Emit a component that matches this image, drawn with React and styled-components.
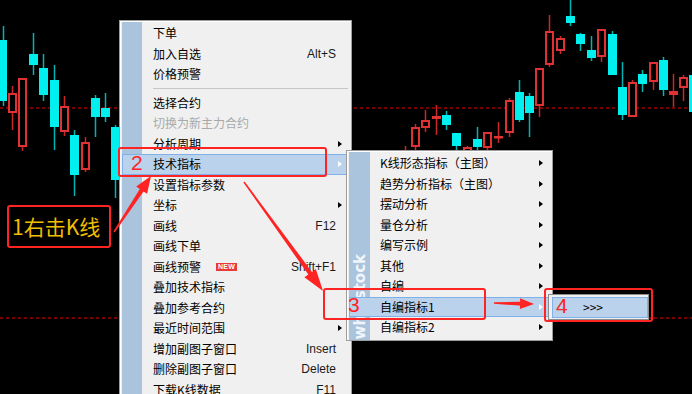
import React from 'react';
import styled, { createGlobalStyle } from 'styled-components';

const STRIPE = '#aac4de';
const RED = '#ff2424';

const GlobalStyle = createGlobalStyle`
  html, body {
    margin: 0;
    padding: 0;
    background: #000;
  }
  body {
    font-family: "Noto Sans CJK SC", "Liberation Sans", sans-serif;
  }
`;

// [left, bodyTop, bodyBottom, wickTop, wickBottom, kind]
const CANDLES = [
  [0, 40, 101, 26, 106, 'up', 7],
  [8, 93, 113, 86, 130, 'down'],
  [18, 78, 147, 78, 151, 'down'],
  [29, 54, 65, 33, 75, 'up'],
  [39, 68, 95, 54, 101, 'up'],
  [50, 80, 127, 65, 150, 'up'],
  [60, 106, 132, 96, 136, 'down'],
  [70, 135, 175, 130, 196, 'up'],
  [81, 142, 170, 137, 172, 'down'],
  [91, 98, 117, 95, 137, 'up'],
  [101, 108, 117, 93, 122, 'up'],
  [111, 127, 180, 125, 198, 'up'],
  [401, 152, 170, 146, 172, 'down'],
  [411, 127, 147, 124, 150, 'down'],
  [421, 120, 128, 110, 132, 'down'],
  [432, 116, 119, 105, 135, 'down'],
  [442, 115, 125, 111, 130, 'up'],
  [452, 133, 146, 133, 152, 'up'],
  [463, 147, 152, 146, 152, 'down'],
  [473, 139, 147, 127, 150, 'up'],
  [483, 132, 148, 132, 150, 'down'],
  [494, 136, 137, 122, 143, 'down'],
  [505, 100, 133, 98, 137, 'down'],
  [515, 92, 120, 80, 122, 'up'],
  [525, 96, 113, 93, 137, 'up'],
  [535, 68, 106, 68, 117, 'down'],
  [545, 31, 65, 15, 67, 'down'],
  [556, 38, 51, 36, 54, 'down'],
  [566, 16, 23, 0, 26, 'up'],
  [576, 34, 44, 33, 51, 'up'],
  [587, 50, 58, 36, 61, 'up'],
  [597, 29, 57, 29, 62, 'down'],
  [608, 34, 75, 31, 75, 'up'],
  [618, 87, 115, 62, 120, 'up'],
  [628, 82, 117, 80, 117, 'down'],
  [638, 74, 84, 70, 92, 'up'],
  [649, 62, 82, 62, 90, 'down'],
  [659, 60, 90, 57, 96, 'up'],
  [669, 91, 95, 74, 107, 'down'],
  [679, 77, 88, 75, 101, 'down'],
  [689, 75, 112, 72, 115, 'up'],
];

const MAIN_ITEMS = [
  { label: '下单' },
  { label: '加入自选', shortcut: 'Alt+S' },
  { label: '价格预警' },
  { separator: true },
  { label: '选择合约' },
  { label: '切换为新主力合约', disabled: true },
  { label: '分析周期', sub: true },
  { label: '技术指标', sub: true, active: true },
  { label: '设置指标参数' },
  { label: '坐标', sub: true },
  { label: '画线', shortcut: 'F12' },
  { label: '画线下单' },
  { label: '画线预警', badge: true, shortcut: 'Shift+F1' },
  { label: '叠加技术指标' },
  { label: '叠加参考合约' },
  { label: '最近时间范围', sub: true },
  { label: '增加副图子窗口', shortcut: 'Insert' },
  { label: '删除副图子窗口', shortcut: 'Delete' },
  { label: '下载K线数据', shortcut: 'F11' },
];

const SUB_ITEMS = [
  { label: 'K线形态指标（主图）', sub: true },
  { label: '趋势分析指标（主图）', sub: true },
  { label: '摆动分析', sub: true },
  { label: '量仓分析', sub: true },
  { label: '编写示例', sub: true },
  { label: '其他', sub: true },
  { label: '自编', sub: true },
  { label: '自编指标1', sub: true, active: true },
  { label: '自编指标2', sub: true },
];

function arrowPoints(x0, y0, x1, y1, head, hw, sw = 2, tw = 0.8) {
  const len = Math.hypot(x1 - x0, y1 - y0);
  const dx = (x1 - x0) / len;
  const dy = (y1 - y0) / len;
  const nx = -dy;
  const ny = dx;
  const bx = x1 - dx * head;
  const by = y1 - dy * head;
  const pts = [
    [x0 + nx * tw, y0 + ny * tw],
    [bx + nx * sw, by + ny * sw],
    [bx + nx * hw, by + ny * hw],
    [x1, y1],
    [bx - nx * hw, by - ny * hw],
    [bx - nx * sw, by - ny * sw],
    [x0 - nx * tw, y0 - ny * tw],
  ];
  return pts.map(p => p.map(v => v.toFixed(1)).join(',')).join(' ');
}

function Candle({ c }) {
  const [x, bt, bb, wt, wb, kind, w = 9] = c;
  const mid = x + Math.floor(w / 2) + 0.5;
  if (kind === 'up') {
    return (
      <g>
        <line x1={mid} x2={mid} y1={wt} y2={wb} stroke="#00b4b4" strokeWidth="1.5" />
        <rect x={x} y={bt} width={w} height={Math.max(bb - bt, 1)} fill="#00f0f0" />
      </g>
    );
  }
  return (
    <g>
      <line x1={mid} x2={mid} y1={wt} y2={wb} stroke="#c82828" strokeWidth="1.5" />
      <rect
        x={x + 1}
        y={bt + 1}
        width={w - 2}
        height={Math.max(bb - bt - 2, 0.5)}
        fill="#000"
        stroke="#e03232"
        strokeWidth="2"
      />
    </g>
  );
}

function Chart() {
  return (
    <ChartSvg width="692" height="394" viewBox="0 0 692 394">
      <line x1="0" x2="692" y1="108" y2="108" stroke="#7a0000" strokeWidth="2" strokeDasharray="3 3" />
      <line x1="0" x2="692" y1="318" y2="318" stroke="#7a0000" strokeWidth="2" strokeDasharray="3 3" />
      {CANDLES.map((c, i) => (
        <Candle key={i} c={c} />
      ))}
    </ChartSvg>
  );
}

function MenuRow({ item, gutter }) {
  if (item.separator) return <Separator />;
  return (
    <Item $active={item.active} $disabled={item.disabled} $gutter={gutter}>
      <span />
      <Label>
        {item.label}
        {item.badge && <NewBadge>NEW</NewBadge>}
      </Label>
      <Shortcut>{item.shortcut}</Shortcut>
      <span>{item.sub && <SubArrow $active={item.active} />}</span>
    </Item>
  );
}

export default function App() {
  return (
    <Screen>
      <GlobalStyle />
      <Chart />

      <Menu $left={119} $top={20} $width={233} $stripe={20}>
        {MAIN_ITEMS.map((item, i) => (
          <MenuRow key={i} item={item} gutter={30} />
        ))}
      </Menu>

      <Menu $left={346} $top={150} $width={207} $stripe={21}>
        <Watermark>wh6 stock</Watermark>
        {SUB_ITEMS.map((item, i) => (
          <MenuRow key={i} item={item} gutter={30} />
        ))}
      </Menu>

      <TinyMenu>
        <Item $active $gutter={30}>
          <span />
          <Label>&gt;&gt;&gt;</Label>
          <Shortcut />
          <span />
        </Item>
      </TinyMenu>

      <Callout $left={7} $top={205} $width={104} $height={43} $pad={3}>
        <HintText>1右击K线</HintText>
      </Callout>
      <Callout $left={118} $top={147} $width={209} $height={30} $pad={11}>
        <StepNumber>2</StepNumber>
      </Callout>
      <Callout $left={323} $top={288} $width={163} $height={32} $pad={23}>
        <StepNumber>3</StepNumber>
      </Callout>
      <Callout $left={544} $top={288} $width={109} $height={34} $pad={10}>
        <StepNumber>4</StepNumber>
      </Callout>

      <ArrowLayer width="692" height="394" viewBox="0 0 692 394">
        <polygon points={arrowPoints(114, 232, 151, 176, 17, 6.5, 2.2)} fill={RED} />
        <polygon points={arrowPoints(244, 182, 323, 291, 22, 7, 2.2)} fill={RED} />
        <polygon points={arrowPoints(494, 303, 534, 304, 14, 5.5, 2)} fill={RED} />
      </ArrowLayer>
    </Screen>
  );
}

const Screen = styled.div`
  position: relative;
  width: 692px;
  height: 394px;
  overflow: hidden;
  background: #000;
`;

const ChartSvg = styled.svg`
  display: block;
`;

const Menu = styled.div`
  position: absolute;
  left: ${p => p.$left}px;
  top: ${p => p.$top}px;
  width: ${p => p.$width}px;
  box-sizing: border-box;
  padding: 2px 1px 2px 2px;
  border: 1px solid #9c9c9c;
  box-shadow: inset 1px 1px 0 #fff;
  background: linear-gradient(
    to right,
    #f0f0f0 0 2px,
    ${STRIPE} 2px ${p => 2 + p.$stripe}px,
    #f0f0f0 ${p => 2 + p.$stripe}px
  );
`;

const Item = styled.div`
  position: relative;
  display: grid;
  grid-template-columns: ${p => p.$gutter}px 1fr auto 13px;
  align-items: center;
  height: 20.5px;
  box-sizing: border-box;
  border: 1px solid ${p => (p.$active ? '#7fb1e8' : 'transparent')};
  background: ${p => (p.$active ? '#bad2ec' : 'transparent')};
  color: ${p => (p.$disabled ? '#a9a9a9' : '#000')};
  font-size: 12px;
  line-height: 1;
  white-space: nowrap;
`;

const Label = styled.span`
  display: flex;
  align-items: center;
`;

const Shortcut = styled.span`
  font-family: "Liberation Sans", "DejaVu Sans", sans-serif;
  font-size: 12px;
  color: #1a1a1a;
`;

const SubArrow = styled.i`
  display: block;
  margin-left: 2px;
  width: 0;
  height: 0;
  border-left: 4px solid ${p => (p.$active ? '#fff' : '#000')};
  border-top: 3.5px solid transparent;
  border-bottom: 3.5px solid transparent;
`;

const NewBadge = styled.span`
  display: inline-block;
  margin-left: 15px;
  width: 21px;
  height: 8px;
  background: #e83a3a;
  color: #fff;
  font-family: "Liberation Sans", sans-serif;
  font-weight: bold;
  font-size: 7px;
  line-height: 8px;
  text-align: center;
  letter-spacing: 0.3px;
`;

const Separator = styled.div`
  display: flex;
  align-items: center;
  height: 8px;
  padding: 0 2px 0 31px;

  &::after {
    content: '';
    flex: 1;
    height: 1px;
    background: #c6c6c6;
  }
`;

const Watermark = styled.span`
  position: absolute;
  left: 2px;
  bottom: 0;
  width: 21px;
  writing-mode: vertical-rl;
  transform: rotate(180deg);
  display: flex;
  align-items: center;
  font-family: "DejaVu Sans", sans-serif;
  font-weight: bold;
  font-size: 15px;
  color: rgba(255, 255, 255, 0.85);
  white-space: nowrap;
`;

const TinyMenu = styled.div`
  position: absolute;
  left: 548px;
  top: 294px;
  width: 101px;
  box-sizing: border-box;
  padding: 2px 0 1px 3px;
  border: 1px solid #8c8c8c;
  background: #f0f0f0;
  color: #333;
`;

const Callout = styled.div`
  position: absolute;
  left: ${p => p.$left}px;
  top: ${p => p.$top}px;
  width: ${p => p.$width}px;
  height: ${p => p.$height}px;
  box-sizing: border-box;
  display: flex;
  align-items: center;
  padding-left: ${p => p.$pad}px;
  border: 2px solid ${RED};
  border-radius: 3px;
`;

const StepNumber = styled.span`
  font-family: "Liberation Sans", sans-serif;
  font-size: 21px;
  line-height: 1;
  color: ${RED};
`;

const HintText = styled.span`
  font-family: "Noto Sans CJK SC", sans-serif;
  font-size: 21px;
  line-height: 1;
  color: #f0be00;
  white-space: nowrap;
`;

const ArrowLayer = styled.svg`
  position: absolute;
  left: 0;
  top: 0;
  pointer-events: none;
`;
